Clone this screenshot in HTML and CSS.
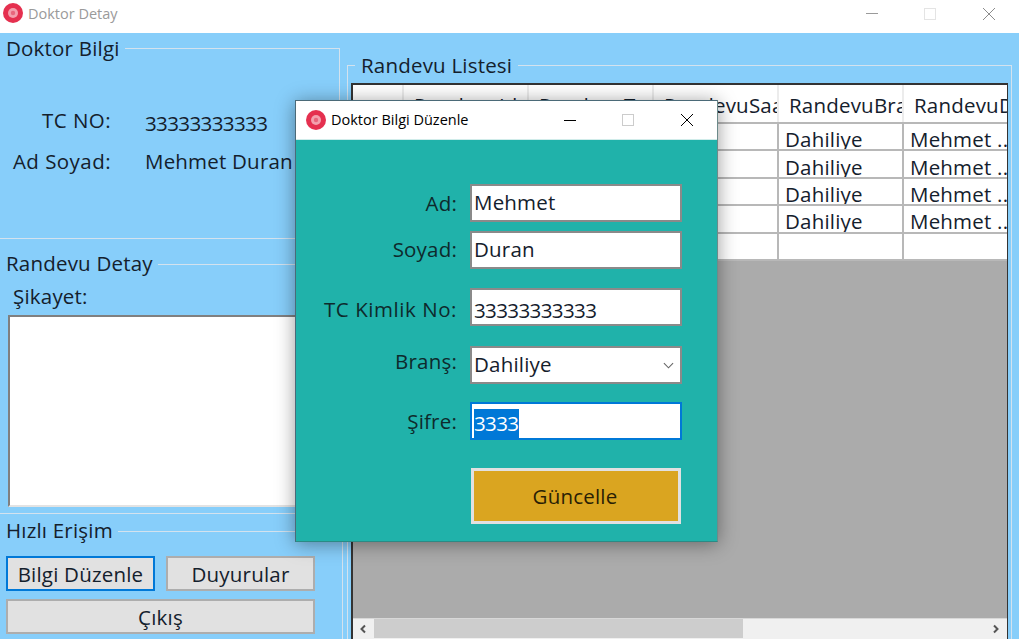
FILE: index.html
```html
<!DOCTYPE html>
<html lang="tr">
<head>
<meta charset="utf-8">
<title>Doktor Detay</title>
<link rel="stylesheet" href="styles.css">
</head>
<body>
<div class="window">
  <header class="titlebar">
    <svg class="app-icon" viewBox="0 0 20 20"><circle cx="10" cy="10" r="10" fill="#e5304f"/><circle cx="10" cy="10" r="5" fill="#f3a0ae"/><circle cx="10" cy="10" r="2.2" fill="#e8667c"/></svg>
    <span class="title title-inactive">Doktor Detay</span>
    <div class="controls controls-inactive">
      <svg class="ctl" viewBox="0 0 12 12"><path d="M0 5.500H12" stroke="#9a9a9a"/></svg>
      <svg class="ctl" viewBox="0 0 12 12"><rect x=".5" y=".5" width="11" height="11" fill="none" stroke="#e4e4e4"/></svg>
      <svg class="ctl" viewBox="0 0 12 12"><path d="M0 0L12 12M12 0L0 12" stroke="#8c8c8c"/></svg>
    </div>
  </header>
  <main class="content">
    <div class="left">
      <fieldset class="group group-doktor">
        <legend>Doktor Bilgi</legend>
        <div class="info-row info-tc"><span class="info-label info-label-wide">TC NO:</span><span class="info-value digits">33333333333</span></div>
        <div class="info-row info-ad"><span class="info-label info-label-wide">Ad Soyad:</span><span class="info-value">Mehmet Duran</span></div>
      </fieldset>
      <fieldset class="group group-randevu">
        <legend>Randevu Detay</legend>
        <div class="sikayet-label">Şikayet:</div>
        <div class="textarea"></div>
      </fieldset>
      <fieldset class="group group-hizli">
        <legend>Hızlı Erişim</legend>
        <div class="quick">
          <button class="btn btn-focus">Bilgi Düzenle</button>
          <button class="btn">Duyurular</button>
          <button class="btn btn-wide">Çıkış</button>
        </div>
      </fieldset>
    </div>
    <fieldset class="group group-liste">
      <legend>Randevu Listesi</legend>
      <div class="grid">
        <table class="table">
          <thead>
            <tr><th class="c0"></th><th>RandevuId</th><th>RandevuTarih</th><th>RandevuSaati</th><th>RandevuBranş</th><th>RandevuDoktor</th></tr>
          </thead>
          <tbody>
            <tr><td class="c0"></td><td></td><td></td><td></td><td>Dahiliye</td><td>Mehmet ...</td></tr>
            <tr><td class="c0"></td><td></td><td></td><td></td><td>Dahiliye</td><td>Mehmet ...</td></tr>
            <tr><td class="c0"></td><td></td><td></td><td></td><td>Dahiliye</td><td>Mehmet ...</td></tr>
            <tr><td class="c0"></td><td></td><td></td><td></td><td>Dahiliye</td><td>Mehmet ...</td></tr>
            <tr><td class="c0"></td><td></td><td></td><td></td><td></td><td></td></tr>
          </tbody>
        </table>
        <div class="grid-empty"></div>
        <div class="hscroll">
          <svg class="arrow" viewBox="0 0 8 10"><path d="M6 1.500L2.500 5L6 8.500" fill="none" stroke="#555" stroke-width="2"/></svg>
          <div class="thumb"></div>
          <svg class="arrow arrow-right" viewBox="0 0 8 10"><path d="M2 1.500L5.500 5L2 8.500" fill="none" stroke="#555" stroke-width="2"/></svg>
        </div>
      </div>
    </fieldset>
  </main>
</div>

<section class="dialog">
  <header class="dialog-bar">
    <svg class="app-icon" viewBox="0 0 20 20"><circle cx="10" cy="10" r="10" fill="#e5304f"/><circle cx="10" cy="10" r="5" fill="#f3a0ae"/><circle cx="10" cy="10" r="2.2" fill="#e8667c"/></svg>
    <span class="title">Doktor Bilgi Düzenle</span>
    <div class="controls">
      <svg class="ctl" viewBox="0 0 12 12"><path d="M0 6.500H13" stroke="#000"/></svg>
      <svg class="ctl" viewBox="0 0 12 12"><rect x=".5" y=".5" width="11" height="11" fill="none" stroke="#ccc"/></svg>
      <svg class="ctl" viewBox="0 0 12 12"><path d="M0 0L12 12M12 0L0 12" stroke="#000"/></svg>
    </div>
  </header>
  <div class="dialog-body">
    <div class="row"><span class="row-label">Ad:</span><div class="field">Mehmet</div></div>
    <div class="row row-soyad"><span class="row-label">Soyad:</span><div class="field">Duran</div></div>
    <div class="row row-tc"><span class="row-label">TC Kimlik No:</span><div class="field field-digits"><span class="digits">33333333333</span></div></div>
    <div class="row row-brans"><span class="row-label">Branş:</span>
      <div class="field field-select">Dahiliye
        <svg class="chevron" viewBox="0 0 12 7"><path d="M1 1L6 6L11 1" fill="none" stroke="#666" stroke-width="1.200"/></svg>
      </div>
    </div>
    <div class="row row-sifre"><span class="row-label">Şifre:</span><div class="field field-focus field-digits"><span class="selected digits">3333</span></div></div>
    <button class="update">Güncelle</button>
  </div>
</section>
</body>
</html>
```
FILE: styles.css
```css
* { box-sizing: border-box; }
html, body { margin: 0; height: 639px; overflow: hidden; }
body {
  position: relative;
  font-family: "Open Sans", "Noto Sans", sans-serif;
  font-size: 20.500px;
  letter-spacing: 0.2px;
  color: #14202c;
  background: #87cefa;
}
.digits { letter-spacing: -0.6px; }

.window { height: 639px; display: flex; flex-direction: column; overflow: hidden; }
.titlebar { height: 33px; flex: none; background: #fff; display: flex; align-items: flex-start; padding: 3px 0 0 3px; }
.app-icon { width: 20px; height: 20px; flex: none; }
.title { font-size: 14.500px; margin-left: 5px; color: #000; white-space: nowrap; letter-spacing: 0; line-height: 20px; }
.title-inactive { color: #9a9a9a; margin-left: 5px; margin-top: 1px; }
.controls { margin-left: auto; display: flex; align-items: center; gap: 46px; }
.controls-inactive { padding: 5px 24px 0 0; }
.ctl { width: 12px; height: 12px; display: block; }
.ctl:nth-child(2) { margin-right: 1px; }

.content { flex: 1; min-height: 0; display: flex; padding-top: 2px; align-items: flex-start; }
.left { width: 344px; margin-left: -1px; flex: none; display: flex; flex-direction: column; gap: 12px; }

.group { margin: 0; padding: 0; border: 1px solid #d3e2ee; min-width: 0; }
.group legend { margin-left: 0; padding: 0 5px 0 6px; height: 26px; line-height: 24px; white-space: nowrap; }
.group-doktor legend { line-height: 26px; }
.group-doktor { height: 204px; margin-right: 3px; padding-top: 46px; }
.group-randevu { height: 263px; }
.group-hizli { height: 140px; margin-top: -8px; padding-top: 12px; }
.group-liste { flex: 1; height: 640px; margin: 17px 7px 0 4px; padding: 5px 3px 0 3px; }
.group-liste legend { margin-left: 4px; padding: 0 6px; line-height: 26px; }

.info-row { display: flex; align-items: center; height: 26px; }
.info-ad { margin-top: 15px; }
.info-label { width: 111px; text-align: right; flex: none; }
.info-label-wide { letter-spacing: 0.45px; }
.info-value { margin-left: 34px; white-space: nowrap; }
.info-tc .info-value { margin-top: 6px; }

.sikayet-label { margin: 6px 0 0 13px; line-height: 26px; height: 26px; }
.textarea { width: 330px; height: 192px; margin: 6px 0 0 8px; background: #fff; border: 2px solid #808080; border-right-color: #e3e3e3; border-bottom-color: #e3e3e3; }

.quick { display: grid; grid-template-columns: 149px 149px; column-gap: 11px; row-gap: 8px; margin-left: 6px; }
.btn { height: 35px; font: inherit; letter-spacing: inherit; color: inherit; background: #e1e1e1; border: 2px solid #adadad; padding: 0; }
.btn-focus { border-color: #0078d7; }
.btn-wide { grid-column: 1 / -1; }

.grid { width: 657px; height: 600px; border: 2px solid #333; border-bottom: none; border-right-width: 1px; background: #ababab; display: flex; flex-direction: column; overflow: hidden; }
.table { border-collapse: collapse; table-layout: fixed; width: 675px; flex: none; background: #fff; }
.table th, .table td { width: 125px; padding: 0; overflow: hidden; white-space: nowrap; text-align: left; font-weight: 400; border: 2px solid #b8b8b8; border-top: none; border-left: none; }
.table th { height: 38px; padding: 2px 0 0 10px; border-right: 2px solid #ececec; border-bottom-color: #b8b8b8; }
.table td { height: 27.400px; padding: 5px 0 0 6px; line-height: 20px; }
.table .c0 { width: 50px; }
.grid-empty { flex: none; height: 357px; background: #ababab; }
.hscroll { flex: none; height: 21px; background: #f0f0f0; border-top: 1px solid #d8d8d8; display: flex; align-items: center; padding-left: 6px; }
.arrow { width: 8px; height: 10px; flex: none; }
.thumb { width: 369px; height: 19px; margin-left: 7px; background: #cdcdcd; }
.arrow-right { margin-left: auto; margin-right: 7px; }

.dialog { position: absolute; left: 295px; top: 100px; width: 423px; height: 442px; background: #20b2aa; border: 1px solid #4b6a78; border-right-color: #6c8a8a; border-bottom-color: #2b8a85; box-shadow: 0 2px 18px rgba(0, 0, 0, .4); }
.dialog-bar { height: 39px; background: #fff; display: flex; align-items: center; padding-left: 10px; border-bottom: 1px solid #d0ecea; }
.dialog-bar .controls { gap: 46px; padding-right: 24px; }
.dialog-body { padding: 44px 35px 0 0; display: flex; flex-direction: column; align-items: flex-end; }
.row { display: flex; align-items: center; justify-content: flex-end; }
.row-soyad { margin-top: 9px; }
.row-soyad .row-label { margin-bottom: 2px; }
.row-tc { margin-top: 19px; }
.row-brans { margin-top: 20px; }
.row-sifre { margin-top: 18px; }
.row-label { color: #0e2a2c; margin-right: 13px; white-space: nowrap; }
.row-tc .row-label { margin-top: 4px; letter-spacing: 0.55px; }
.row-brans .row-label { margin-bottom: 8px; }
.field { width: 212px; height: 38px; background: #fff; border: 2px solid #8a8a8a; padding: 0 0 2px 2px; line-height: 32px; white-space: nowrap; display: flex; align-items: center; }
.field-digits { padding-bottom: 0; }
.field-digits > .digits { margin-top: 5px; }
.field-select { justify-content: space-between; padding-right: 6px; }
.chevron { width: 11px; height: 7px; flex: none; margin-top: 2px; }
.field-focus { border-color: #0078d7; }
.selected { background: #0078d7; color: #fff; line-height: 29px; }
.update { width: 210px; height: 56px; margin: 28px 1px 0 0; background: #daa520; border: 3px solid #e1e1e1; font: inherit; letter-spacing: inherit; color: #2a1f05; padding: 0 2px 0 0; }
```
